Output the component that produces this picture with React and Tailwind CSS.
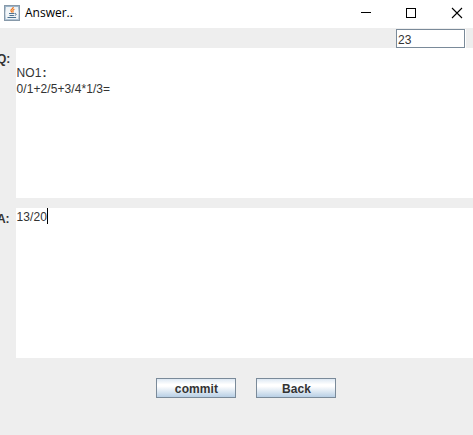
import React from "react";

function JavaIcon() {
  return (
    <svg width="16" height="16" viewBox="0 0 16 16">
      <defs>
        <linearGradient id="tile" x1="0" y1="0" x2="0" y2="1">
          <stop offset="0" stopColor="#93adc4" />
          <stop offset="0.5" stopColor="#d5dfe8" />
          <stop offset="1" stopColor="#a9bfd2" />
        </linearGradient>
      </defs>
      <rect x="0.5" y="0.5" width="15" height="15" fill="url(#tile)" stroke="#8799a9" />
      <rect x="2" y="2" width="12" height="12" fill="#f6f8fa" opacity="0.9" />
      <path d="M9.3 2C9.6 3.7 6.4 4.2 6.9 5.7c.2.7.8 1 .9 1.8M10.4 4.2C8.9 4.9 8.5 5.5 9 6.3c.2.4.1.8-.2 1.2" fill="none" stroke="#f07a22" strokeWidth="1.2" />
      <path d="M5 8.5h5.4M5.5 10.5h4.4M10.8 8.5c2-.3 1.8 1.6 0 1.9M3.5 12.5h8.6" fill="none" stroke="#4c718f" />
    </svg>
  );
}

function WindowControls() {
  return (
    <svg width="103" height="12" viewBox="0 0 103 12" shapeRendering="crispEdges" fill="none" stroke="#000">
      <path d="M0 5.5h10M45.5 1.5h9v9h-9z" />
      <path d="M91 1l10 10M101 1l-10 10" shapeRendering="auto" strokeWidth="1.1" />
    </svg>
  );
}

function Button({ children }) {
  return (
    <button className="flex h-5 w-20 items-center justify-center border border-[#7a8a99] bg-[linear-gradient(to_bottom,#dde8f3_0%,#ffffff_30%,#ffffff_40%,#b8cfe5_100%)] pt-0.5 pl-px text-[12px] leading-4 font-bold tracking-[0.1px] text-[#333]">
      {children}
    </button>
  );
}

function Panel({ label, children }) {
  return (
    <div className="flex h-[150px]">
      <div className="w-4 shrink-0 pt-[3px]">
        <span className="-ml-[3px] block text-xs leading-4 font-bold tracking-[-0.2px] text-[#333]">{label}</span>
      </div>
      <div className="flex-1 bg-white pl-[0.5px] text-[12px] leading-4 tracking-[0.08px] text-[#333]">{children}</div>
    </div>
  );
}

export default function App() {
  return (
    <div className="h-[435px] w-[473px] overflow-hidden bg-[#eeeeee] font-['Liberation_Sans',Arial,sans-serif]">
      <header className="flex h-7 items-center bg-white pr-[9px] pb-[3px] pl-1">
        <JavaIcon />
        <span className="ml-[5px] flex-1 font-['Open_Sans','Noto_Sans',sans-serif] text-[12px] leading-4 text-black">Answer..</span>
        <WindowControls />
      </header>
      <div className="flex h-5 justify-end pt-px pr-[7px]">
        <div className="h-[19px] w-[70px] border-r border-white">
          <div className="h-[19px] w-[69px] border border-[#7a8a99] bg-white pt-[2px] pl-px text-[12px] leading-4 text-[#333]">
            23
          </div>
        </div>
      </div>
      <Panel label="Q:">
        <div className="pt-[17px]">
          <p>NO1<span className="inline-block w-3 pl-px font-bold">:</span></p>
          <p>0/1+2/5+3/4*1/3=</p>
        </div>
      </Panel>
      <div className="h-2.5" />
      <Panel label="A:">
        <div className="flex">
          <span className="w-[30.5px] pt-px">13/20</span>
          <span className="h-4 w-px bg-black" />
        </div>
      </Panel>
      <div className="flex gap-5 pt-5 pl-[156px]">
        <Button>commit</Button>
        <Button>Back</Button>
      </div>
    </div>
  );
}
